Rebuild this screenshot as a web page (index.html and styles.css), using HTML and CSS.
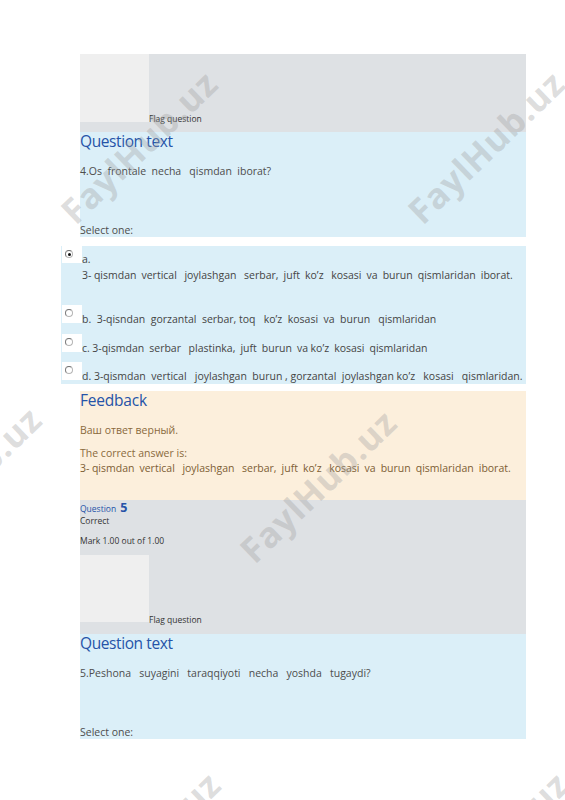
FILE: index.html
```html
<!DOCTYPE html>
<html lang="en">
<head>
<meta charset="utf-8">
<title>Quiz review</title>
<link rel="stylesheet" href="styles.css">
</head>
<body>
<div class="page">
  <div class="que">
    <div class="info flagrow">
      <div class="flagbox"></div>
      <span class="flaglabel">Flag question</span>
    </div>
    <div class="content">
      <h4 class="qhead">Question text</h4>
      <p class="qtext">4.Os  frontale  necha   qismdan  iborat?</p>
      <p class="prompt">Select one:</p>
    </div>
    <div class="answer">
      <div class="opt opt-a">
        <div class="radiocell"><span class="radio checked"></span></div>
        <div class="opttext">
          <div class="letter">a.</div>
          <div class="line l-a">3- qismdan  vertical   joylashgan   serbar,  juft  ko’z   kosasi  va  burun  qismlaridan  iborat.</div>
        </div>
      </div>
      <div class="opt opt-b">
        <div class="radiocell"><span class="radio"></span></div>
        <div class="opttext line l-b">b.  3-qisndan  gorzantal  serbar, toq   ko’z  kosasi  va  burun   qismlaridan</div>
      </div>
      <div class="opt opt-c">
        <div class="radiocell"><span class="radio"></span></div>
        <div class="opttext line l-c">c. 3-qismdan  serbar   plastinka,  juft  burun  va ko’z  kosasi  qismlaridan</div>
      </div>
      <div class="opt opt-d">
        <div class="radiocell"><span class="radio"></span></div>
        <div class="opttext line l-d">d. 3-qismdan  vertical   joylashgan  burun , gorzantal  joylashgan ko’z   kosasi   qismlaridan.</div>
      </div>
    </div>
    <div class="feedback">
      <h4 class="qhead fbhead">Feedback</h4>
      <p class="fb1">Ваш ответ верный.</p>
      <p class="fb2">The correct answer is:</p>
      <p class="fb3 l-a">3- qismdan  vertical   joylashgan   serbar,  juft  ko’z   kosasi  va  burun  qismlaridan  iborat.</p>
    </div>
    <div class="info info2">
      <div class="qno"><span class="qword">Question</span> <span class="qnum">5</span></div>
      <div class="state">Correct</div>
      <div class="grade">Mark 1.00 out of 1.00</div>
      <div class="flagrow flagrow2">
        <div class="flagbox"></div>
        <span class="flaglabel">Flag question</span>
      </div>
    </div>
    <div class="content content2">
      <h4 class="qhead">Question text</h4>
      <p class="qtext">5.Peshona   suyagini   taraqqiyoti   necha   yoshda   tugaydi?</p>
      <p class="prompt">Select one:</p>
    </div>
  </div>
</div>
<div class="watermarks" aria-hidden="true">
  <span class="wm wm1">FaylHub.uz</span>
  <span class="wm wm2">FaylHub.uz</span>
  <span class="wm wm3">FaylHub.uz</span>
  <span class="wm wm4">FaylHub.uz</span>
  <span class="wm wm5">FaylHub.uz</span>
  <span class="wm wm6">FaylHub.uz</span>
</div>
</body>
</html>
```
FILE: styles.css
```css
* { box-sizing: border-box; }
html, body { margin: 0; padding: 0; background: #fff; }
body {
  font-family: "Open Sans", "Noto Sans", "DejaVu Sans", sans-serif;
  color: #4a4a4a;
  width: 565px;
  height: 800px;
  overflow: hidden;
  position: relative;
}
.page { padding-top: 54px; }
.que { margin-left: 80px; width: 446px; }
p, h4 { margin: 0; }

.info { background: #dee1e4; }
.flagrow {
  display: flex;
  align-items: flex-end;
  padding-bottom: 10px;
}
.flagbox { width: 69px; height: 68px; background: #efefef; }
.flaglabel {
  font-size: 8.5px;
  line-height: 10px;
  color: #333;
  margin-bottom: -2px;
  white-space: nowrap;
}

.content { background: #dbeff8; height: 105px; }
.qhead {
  font-weight: 400;
  font-size: 15.5px;
  line-height: 18px;
  color: #2553a8;
  letter-spacing: -0.4px;
}
.fbhead { letter-spacing: -0.2px; }
.qtext {
  font-size: 10.5px;
  line-height: 14px;
  margin-top: 14px;
  white-space: pre;
  color: #4d4d4d;
}
.prompt {
  font-size: 10.5px;
  line-height: 14px;
  margin-top: 45px;
  color: #4d4d4d;
}

.answer {
  margin-top: 9px;
  margin-left: -19px;
  background: #dbeff8;
  padding: 0 0 4px 1px;
  height: 138px;
}
.opt { display: flex; align-items: flex-start; }
.opt-b { margin-top: 23px; }
.opt-c { margin-top: 8px; }
.opt-d { margin-top: 7px; }
.radiocell {
  width: 20px;
  height: 18px;
  background: #fff;
  flex: 0 0 20px;
  padding: 4px 0 0 3px;
}
.opt-a .radiocell { height: 17px; }
.radio {
  display: block;
  width: 8px;
  height: 8px;
  border-radius: 50%;
  border: 1px solid #b5b5b5;
  border-top-color: #6f6f6f;
  border-left-color: #7a7a7a;
  background: #fff;
  position: relative;
}
.radio.checked::after {
  content: "";
  position: absolute;
  left: 1.5px;
  top: 1.5px;
  width: 3px;
  height: 3px;
  border-radius: 50%;
  background: #111;
}
.opttext {
  font-size: 10.5px;
  line-height: 14px;
  color: #454545;
}
.letter { margin-top: 6px; }
.line { white-space: pre; }
.opt-a .line { margin-top: 2px; }
.opt-b .opttext, .opt-c .opttext, .opt-d .opttext { padding-top: 7px; }
.l-a { word-spacing: -0.2px; }
.l-b { word-spacing: 0; }
.l-c { word-spacing: -0.2px; }
.l-d { word-spacing: 0; }

.feedback {
  margin-top: 7px;
  background: #fcefdc;
  color: #8a6a3c;
  height: 109px;
}
.fb1, .fb2, .fb3 { font-size: 10.5px; line-height: 14px; }
.fb1 { margin-top: 14px; }
.fb2 { margin-top: 9px; }
.fb3 { margin-top: 1px; white-space: pre; color: #7d5e34; }

.info2 { height: 134px; padding-top: 0; }
.qno { line-height: 13px; color: #2553a8; }
.qword { font-size: 8.5px; }
.qnum { font-size: 12.5px; font-weight: 700; }
.state, .grade { font-size: 8.5px; line-height: 12px; color: #333; }
.grade { margin-top: 8px; }
.flagrow2 { margin-top: 8px; padding-bottom: 0; }
.flagrow2 .flagbox { height: 67px; }
.flagrow2 .flaglabel { margin-bottom: -3px; }

.content2 { height: 105px; }

.watermarks {
  position: absolute;
  inset: 0;
  pointer-events: none;
  overflow: hidden;
}
.wm {
  position: absolute;
  width: 280px;
  margin-left: -140px;
  margin-top: -21px;
  text-align: center;
  font-family: "Open Sans", "DejaVu Sans", sans-serif;
  font-weight: 700;
  font-size: 35px;
  line-height: 42px;
  color: rgba(160, 160, 160, 0.36);
  transform: rotate(-44deg);
  white-space: nowrap;
  letter-spacing: 0.8px;
}
.wm1 { left: 139px; top: 147px; }
.wm2 { left: 486px; top: 147px; }
.wm3 { left: -37px; top: 483px; }
.wm4 { left: 318px; top: 486px; }
.wm5 { left: 142px; top: 848px; }
.wm6 { left: 490px; top: 848px; }
```
